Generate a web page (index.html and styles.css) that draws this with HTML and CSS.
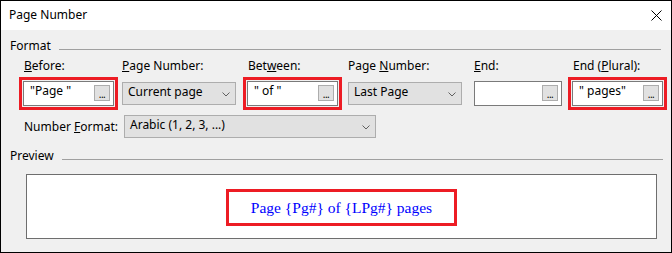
FILE: index.html
```html
<!DOCTYPE html>
<html lang="en">
<head>
    <meta charset="UTF-8">
    <title>Page Number</title>
    <link rel="stylesheet" href="styles.css">
</head>
<body>
    <div class="window">
        <div class="titlebar">
            <span class="title">Page Number</span>
            <svg class="close" width="11" height="11" viewBox="0 0 11 11">
                <path d="M0.5 0.5 L10.5 10.5 M10.5 0.5 L0.5 10.5" stroke="#000" stroke-width="1" fill="none"/>
            </svg>
        </div>

        <div class="content">
            <div class="group-head">
                <span>Format</span>
                <div class="rule"></div>
            </div>

            <div class="fields">
                <div class="col col-before">
                    <label class="shift"><u>B</u>efore:</label>
                    <div class="edit marked">
                        <span>"Page "</span>
                        <span class="dots">...</span>
                    </div>
                </div>
                <div class="col col-page">
                    <label><u>P</u>age Number:</label>
                    <div class="select">
                        <span>Current page</span>
                        <svg class="chevron" width="8" height="5" viewBox="0 0 8 5"><polyline points="0.5,0.5 4,4 7.5,0.5" fill="none" stroke="#606060"/></svg>
                    </div>
                </div>
                <div class="col col-between">
                    <label class="shift">Bet<u>w</u>een:</label>
                    <div class="edit marked">
                        <span>" of "</span>
                        <span class="dots">...</span>
                    </div>
                </div>
                <div class="col col-last">
                    <label>Page <u>N</u>umber:</label>
                    <div class="select">
                        <span>Last Page</span>
                        <svg class="chevron" width="8" height="5" viewBox="0 0 8 5"><polyline points="0.5,0.5 4,4 7.5,0.5" fill="none" stroke="#606060"/></svg>
                    </div>
                </div>
                <div class="col col-end">
                    <label><u>E</u>nd:</label>
                    <div class="edit edit-end">
                        <span></span>
                        <span class="dots">...</span>
                    </div>
                </div>
                <div class="col col-plural">
                    <label class="shift">End (<u>P</u>lural):</label>
                    <div class="edit marked">
                        <span>" pages"</span>
                        <span class="dots">...</span>
                    </div>
                </div>
            </div>

            <div class="numfmt">
                <label>Number <u>F</u>ormat:</label>
                <div class="select select-wide">
                    <span>Arabic (1, 2, 3, ...)</span>
                    <svg class="chevron" width="8" height="5" viewBox="0 0 8 5"><polyline points="0.5,0.5 4,4 7.5,0.5" fill="none" stroke="#606060"/></svg>
                </div>
            </div>

            <div class="group-head preview-head">
                <span>Preview</span>
                <div class="rule"></div>
            </div>

            <div class="preview">
                <span class="sample">Page {Pg#} of {LPg#} pages</span>
            </div>
        </div>
    </div>
</body>
</html>
```

FILE: styles.css
```css
body {
    margin: 0;
    background: #f0f0f0;
    font-family: "Noto Sans", "Open Sans", sans-serif;
    font-size: 12px;
    line-height: 16px;
    color: #000;
}
.window {
    width: 672px;
    height: 253px;
    box-sizing: border-box;
    border: 1px solid #000;
    background: #f0f0f0;
}
.titlebar {
    display: flex;
    align-items: flex-start;
    height: 29px;
    padding: 6px 9px 0 8px;
    box-sizing: border-box;
    background: #fff;
}
.title {
    flex: 1;
}
.close {
    margin-top: 3px;
}
.content {
    padding: 8px 0 0 9px;
}
.group-head {
    display: flex;
    align-items: flex-start;
}
.group-head .rule {
    flex: 1;
    height: 1px;
    margin: 11px 10px 0 8px;
    background: #a0a0a0;
}
.preview-head {
    margin-top: 10px;
}
.preview-head .rule {
    margin-right: 8px;
}

/* field row */
.fields {
    display: flex;
    margin: 4px 0 0 13px;
}
.col label {
    display: block;
    height: 16px;
}
.col label.shift {
    padding-left: 1px;
}
.col-before { width: 99px; }
.col-page { width: 125px; }
.col-between { width: 101px; }
.col-last { width: 126px; }
.col-end { width: 98px; }
.col-plural { width: 91px; }

.edit {
    display: flex;
    align-items: flex-start;
    width: 91px;
    height: 25px;
    margin-top: 7px;
    padding: 1px 0 0 6px;
    box-sizing: border-box;
    background: #fff;
    border: 1px solid #7a7a7a;
}
.edit-end {
    width: 88px;
}
.edit.marked {
    outline: 3px solid #ed1c24;
    outline-offset: 1px;
}
.dots {
    display: flex;
    justify-content: center;
    align-items: flex-end;
    width: 16px;
    height: 16px;
    margin: 2px 3px 0 auto;
    box-sizing: border-box;
    background: #e1e1e1;
    border: 1px solid #adadad;
    font-size: 10px;
    line-height: 10px;
    letter-spacing: -0.5px;
    padding-bottom: 1px;
}

.select {
    display: flex;
    align-items: flex-start;
    width: 114px;
    height: 23px;
    margin-top: 8px;
    padding: 1px 0 0 5px;
    box-sizing: border-box;
    background: #e1e1e1;
    border: 1px solid #adadad;
}
.select span {
    flex: 1;
}
.chevron {
    margin: 8px 5px 0 0;
}

.numfmt {
    display: flex;
    align-items: center;
    margin: 9px 0 0 14px;
}
.numfmt label {
    width: 100px;
}
.select-wide {
    width: 252px;
    margin-top: 0;
}

.preview {
    display: flex;
    justify-content: center;
    align-items: center;
    width: 631px;
    height: 65px;
    margin: 10px 0 0 16px;
    padding-top: 2px;
    box-sizing: border-box;
    background: #fff;
    border: 1px solid #6e6e6e;
}
.sample {
    width: 231px;
    height: 37px;
    box-sizing: border-box;
    border: 3px solid #ed1c24;
    text-align: center;
    font-family: "Liberation Serif", "Times New Roman", serif;
    font-size: 15.5px;
    line-height: 31px;
    color: #0000ff;
}
```
